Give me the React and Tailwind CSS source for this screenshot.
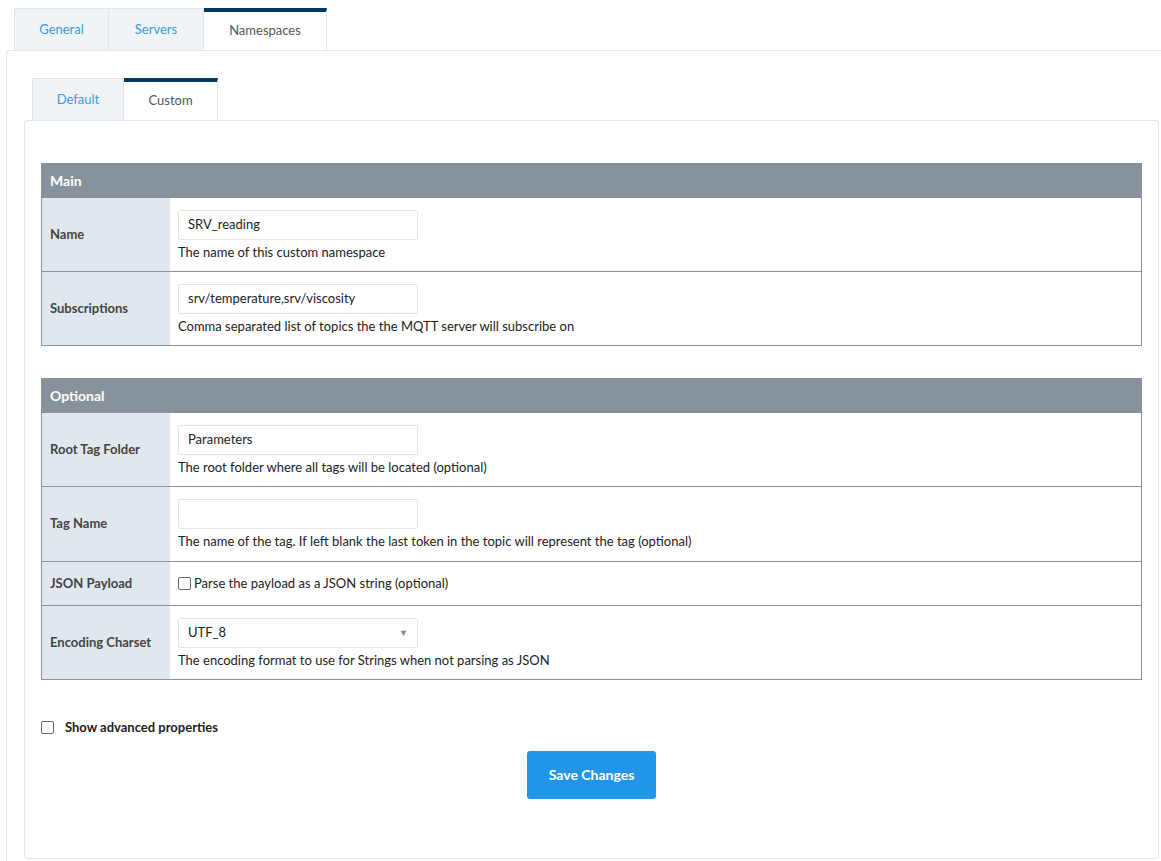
const F = { fontFamily: "Lato, 'Open Sans', sans-serif" };

function Row({ label, children, h }) {
  return (
    <div className={`flex border-t border-[#8a939c] ${h}`}>
      <div className="w-[128px] shrink-0 bg-[#e1e7ee] flex items-center pl-[8px] text-[13px] font-bold text-[#444]">{label}</div>
      <div className="flex-1 flex flex-col justify-center pl-[8px] text-[13px] text-[#222]">{children}</div>
    </div>
  );
}

function Input({ value }) {
  return (
    <div className="w-[240px] h-[30px] border border-[#e2e5e8] rounded-[2px] flex items-center px-[9px] text-[13px] text-[#222]">{value}</div>
  );
}

function Help({ children }) {
  return <div className="mt-[4px] leading-[16px]">{children}</div>;
}

function Section({ title, children }) {
  return (
    <div className="border-x border-b border-[#8a939c]">
      <div className="h-[34px] bg-[#88929c] flex items-center pl-[8px] text-[14px] font-bold text-white">{title}</div>
      {children}
    </div>
  );
}

export default function App() {
  return (
    <div className="w-[1161px] h-[861px] bg-white overflow-hidden" style={F}>
      <div className="flex pl-[14px] pt-[8px]">
        <div className="w-[95px] h-[42px] bg-[#f1f4f7] border border-b-0 border-[#e2e6ea] flex items-center justify-center text-[13px] text-[#3a9ad9]">General</div>
        <div className="w-[95px] h-[42px] bg-[#f1f4f7] border border-l-0 border-b-0 border-[#e2e6ea] flex items-center justify-center text-[13px] text-[#3a9ad9]">Servers</div>
        <div className="w-[123px] h-[42px] bg-white border-t-[4px] border-t-[#003a63] border-r border-[#e2e6ea] flex items-center justify-center text-[13px] text-[#555]">Namespaces</div>
      </div>
      <div className="ml-[6px] border-l border-t border-[#e2e6ea] rounded-tl-[3px] pt-[27px] pl-[17px] h-[811px]">
        <div className="flex pl-[8px]">
          <div className="w-[92px] h-[42px] bg-[#f1f4f7] border border-b-0 border-[#e2e6ea] flex items-center justify-center text-[13px] text-[#3a9ad9]">Default</div>
          <div className="w-[94px] h-[42px] bg-white border-t-[4px] border-t-[#003a63] border-r border-[#e2e6ea] flex items-center justify-center text-[13px] text-[#555]">Custom</div>
        </div>
        <div className="w-[1135px] h-[739px] border border-[#e2e6ea] rounded-[3px] px-[16px] pt-[42px]">
          <Section title="Main">
            <Row label="Name" h="h-[74px]">
              <Input value="SRV_reading" />
              <Help>The name of this custom namespace</Help>
            </Row>
            <Row label="Subscriptions" h="h-[74px]">
              <Input value="srv/temperature,srv/viscosity" />
              <Help>Comma separated list of topics the the MQTT server will subscribe on</Help>
            </Row>
          </Section>
          <div className="h-[32px]" />
          <Section title="Optional">
            <Row label="Root Tag Folder" h="h-[74px]">
              <Input value="Parameters" />
              <Help>The root folder where all tags will be located (optional)</Help>
            </Row>
            <Row label="Tag Name" h="h-[75px]">
              <Input value="" />
              <Help>The name of the tag. If left blank the last token in the topic will represent the tag (optional)</Help>
            </Row>
            <Row label="JSON Payload" h="h-[44px]">
              <div className="flex items-center gap-[3px]">
                <span className="w-[13px] h-[13px] border border-[#666] rounded-[2px] inline-block" />
                Parse the payload as a JSON string (optional)
              </div>
            </Row>
            <Row label="Encoding Charset" h="h-[74px]">
              <div className="w-[240px] h-[30px] border border-[#e2e5e8] rounded-[2px] flex items-center justify-between px-[9px] text-[13px]">
                UTF_8
                <span className="text-[#888] text-[9px]">▼</span>
              </div>
              <Help>The encoding format to use for Strings when not parsing as JSON</Help>
            </Row>
          </Section>
          <div className="flex items-center mt-[38px] gap-[11px] text-[13px] font-bold text-[#222]">
            <span className="w-[13px] h-[13px] border border-[#666] rounded-[2px] inline-block" />
            Show advanced properties
          </div>
          <div className="flex justify-center mt-[13px]">
            <button className="w-[129px] h-[48px] bg-[#2196e9] rounded-[3px] text-white text-[14px] font-bold">Save Changes</button>
          </div>
        </div>
      </div>
    </div>
  );
}
